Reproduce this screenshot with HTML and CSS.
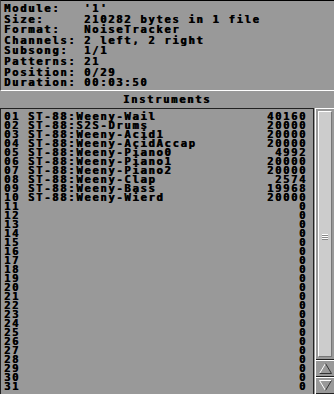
FILE: index.html
```html
<!DOCTYPE html>
<html lang="en">

<head>
  <meta charset="UTF-8" />
  <meta name="viewport" content="width=device-width, initial-scale=1.0" />
  <title>Module Info</title>
  <link rel="stylesheet" href="styles.css">
</head>

<body>
  <div class="window">
    <div class="info">
      <div class="line"><span class="label">Module:</span><span>'1'</span></div>
      <div class="line"><span class="label">Size:</span><span>210282 bytes in 1 file</span></div>
      <div class="line"><span class="label">Format:</span><span>NoiseTracker</span></div>
      <div class="line"><span class="label">Channels:</span><span>2 left, 2 right</span></div>
      <div class="line"><span class="label">Subsong:</span><span>1/1</span></div>
      <div class="line"><span class="label">Patterns:</span><span>21</span></div>
      <div class="line"><span class="label">Position:</span><span>0/29</span></div>
      <div class="line"><span class="label">Duration:</span><span>00:03:50</span></div>
    </div>

    <div class="heading">Instruments</div>

    <div class="panel">
      <div class="list" id="list"></div>
      <div class="scrollbar">
        <div class="track">
          <div class="thumb"><span class="grip"></span></div>
        </div>
        <div class="btn">
          <svg width="15" height="13" viewBox="0 0 15 13">
            <path d="M7.5 1.5 L1.5 11.5" stroke="#fff" fill="none" />
            <path d="M7.5 1.5 L13.5 11.5 L1.5 11.5" stroke="#333" fill="none" />
          </svg>
        </div>
        <div class="btn">
          <svg width="15" height="13" viewBox="0 0 15 13">
            <path d="M1.5 1.5 L13.5 1.5 M1.5 1.5 L7.5 11.5" stroke="#fff" fill="none" />
            <path d="M7.5 11.5 L13.5 1.5" stroke="#333" fill="none" />
          </svg>
        </div>
      </div>
    </div>
  </div>

  <script>
    const instruments = [
      ['ST-88:Weeny-Wail', 40160],
      ['ST-88:S2S-Drums', 20000],
      ['ST-88:Weeny-Acid1', 20000],
      ['ST-88:Weeny-AcidAccap', 20000],
      ['ST-88:Weeny-Piano0', 4992],
      ['ST-88:Weeny-Piano1', 20000],
      ['ST-88:Weeny-Piano2', 20000],
      ['ST-88:Weeny-Clap', 2574],
      ['ST-88:Weeny-Bass', 19968],
      ['ST-88:Weeny-Wierd', 20000]
    ];

    const list = document.getElementById('list');

    for (let i = 0; i < 31; i++) {
      const item = instruments[i] || ['', 0];
      const row = document.createElement('div');
      row.className = 'row';
      row.innerHTML = `
        <span class="num">${String(i + 1).padStart(2, '0')}</span>
        <span class="name">${item[0]}</span>
        <span class="size">${item[1]}</span>
      `;
      list.appendChild(row);
    }
  </script>
</body>

</html>
```

FILE: styles.css
```css
body {
  margin: 0;
  background-color: #999999;
  font-family: 'DejaVu Sans Mono', monospace;
  font-weight: bold;
  font-size: 10.5px;
  letter-spacing: 1.7px;
  color: #000;
  text-shadow: 0.6px 0 0 #000;
}

.window {
  width: 334px;
  height: 394px;
  display: flex;
  flex-direction: column;
  overflow: hidden;
}

.info {
  height: 91px;
  box-sizing: border-box;
  border-top: 1px solid #000;
  border-left: 1px solid #444;
  border-bottom: 1px solid #fff;
  padding: 2px 0 0 3px;
}

.line {
  height: 10.6px;
  line-height: 10.6px;
  white-space: pre;
}

.label {
  display: inline-block;
  width: 80px;
}

.heading {
  height: 17px;
  line-height: 17px;
  text-align: center;
}

.panel {
  flex: 1;
  display: flex;
}

.list {
  flex: 1;
  border-top: 1px solid #222;
  border-left: 1px solid #222;
  border-right: 1px solid #222;
  padding: 3px 6px 0 3px;
  margin-right: 1px;
}

.row {
  display: flex;
  height: 9px;
  line-height: 9px;
  white-space: pre;
}

.num {
  width: 24px;
}

.name {
  flex: 1;
}

.size {
  text-align: right;
}

.scrollbar {
  width: 18px;
  display: flex;
  flex-direction: column;
  border-left: 1px solid #fff;
  border-top: 1px solid #fff;
}

.track {
  flex: 1;
  padding: 2px 2px 2px 2px;
  border-bottom: 1px solid #222;
  display: flex;
}

.thumb {
  flex: 1;
  background-color: #cccccc;
  border-left: 1px solid #fff;
  border-top: 1px solid #fff;
  border-right: 1px solid #777;
  border-bottom: 1px solid #777;
  display: flex;
  align-items: center;
  justify-content: center;
}

.grip {
  width: 6px;
  height: 1px;
  background-color: #fff;
  box-shadow: 0 2px 0 #fff, 0 4px 0 #fff, 0 1px 0 #888, 0 3px 0 #888, 0 5px 0 #888;
}

.btn {
  height: 15px;
  border-top: 1px solid #fff;
  border-bottom: 1px solid #222;
  display: flex;
  align-items: center;
  justify-content: center;
}
```
